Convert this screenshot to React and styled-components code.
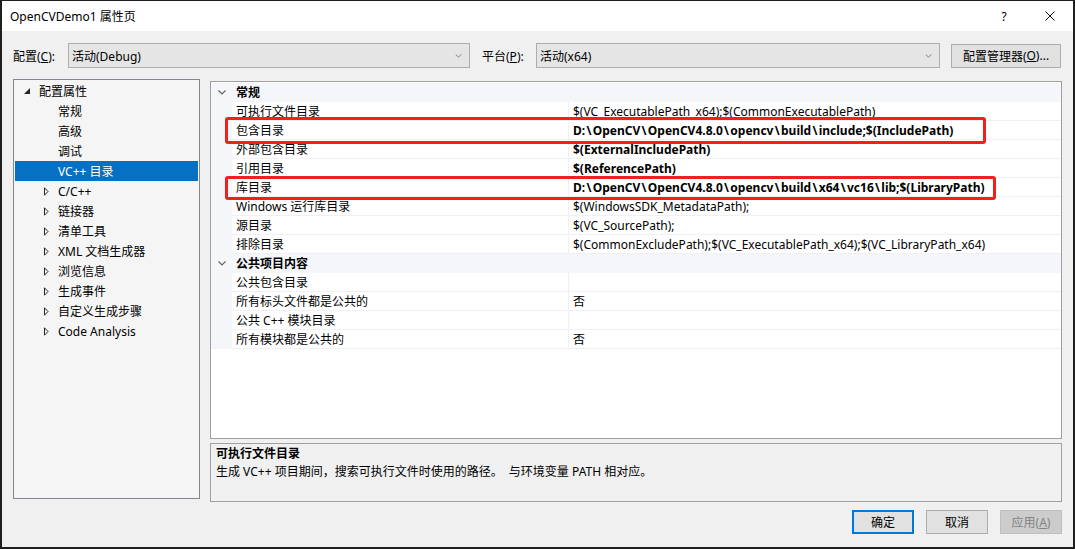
import React from 'react';
import styled, { createGlobalStyle } from 'styled-components';

const GlobalStyle = createGlobalStyle`
  html, body {
    margin: 0;
    padding: 0;
    background: #ffffff;
  }
  body {
    font-family: 'Noto Sans', 'Noto Sans CJK SC', sans-serif;
    font-size: 12px;
    color: #000;
  }
  * {
    box-sizing: border-box;
  }
`;

const treeItems = [
  { label: '常规' },
  { label: '高级' },
  { label: '调试' },
  { label: 'VC++ 目录', selected: true },
  { label: 'C/C++', collapsed: true },
  { label: '链接器', collapsed: true },
  { label: '清单工具', collapsed: true },
  { label: 'XML 文档生成器', collapsed: true },
  { label: '浏览信息', collapsed: true },
  { label: '生成事件', collapsed: true },
  { label: '自定义生成步骤', collapsed: true },
  { label: 'Code Analysis', collapsed: true },
];

const categories = [
  {
    title: '常规',
    rows: [
      { name: '可执行文件目录', value: '$(VC_ExecutablePath_x64);$(CommonExecutablePath)' },
      { name: '包含目录', value: 'D:\\OpenCV\\OpenCV4.8.0\\opencv\\build\\include;$(IncludePath)', bold: true },
      { name: '外部包含目录', value: '$(ExternalIncludePath)', bold: true },
      { name: '引用目录', value: '$(ReferencePath)', bold: true },
      { name: '库目录', value: 'D:\\OpenCV\\OpenCV4.8.0\\opencv\\build\\x64\\vc16\\lib;$(LibraryPath)', bold: true },
      { name: 'Windows 运行库目录', value: '$(WindowsSDK_MetadataPath);' },
      { name: '源目录', value: '$(VC_SourcePath);' },
      { name: '排除目录', value: '$(CommonExcludePath);$(VC_ExecutablePath_x64);$(VC_LibraryPath_x64)' },
    ],
  },
  {
    title: '公共项目内容',
    rows: [
      { name: '公共包含目录', value: '' },
      { name: '所有标头文件都是公共的', value: '否' },
      { name: '公共 C++ 模块目录', value: '' },
      { name: '所有模块都是公共的', value: '否' },
    ],
  },
];

// red annotation frames drawn over the grid
const highlights = [
  { left: 14, top: 35, width: 761, height: 27 },
  { left: 14, top: 94, width: 771, height: 24 },
];

// the dialog font draws backslashes wider than Noto Sans does
const renderPath = (value) =>
  value.split('\\').map((part, i) => (
    <React.Fragment key={i}>
      {i > 0 && <Backslash>\</Backslash>}
      {part}
    </React.Fragment>
  ));

const ChevronDown = ({ color = '#606060', w = 8, h = 5 }) => (
  <svg width={w} height={h} viewBox="0 0 8 5">
    <path d="M0.5 0.5 L4 4 L7.5 0.5" fill="none" stroke={color} strokeWidth="1.1" />
  </svg>
);

const ExpandedGlyph = () => (
  <svg width="6" height="6" viewBox="0 0 6 6">
    <polygon points="6,0 6,6 0,6" fill="#262626" />
  </svg>
);

const CollapsedGlyph = () => (
  <svg width="6" height="9" viewBox="0 0 6 9">
    <polygon points="1.5,0.8 5,4.5 1.5,8.2" fill="none" stroke="#262626" strokeWidth="1" />
  </svg>
);

const CloseGlyph = () => (
  <svg width="10" height="10" viewBox="0 0 10 10">
    <path d="M0.5 0.5 L9.5 9.5 M9.5 0.5 L0.5 9.5" stroke="#111" strokeWidth="1" />
  </svg>
);

export default function App() {
  return (
    <>
      <GlobalStyle />
      <Window>
        <TitleBar>
          <Title>OpenCVDemo1 属性页</Title>
          <CaptionButton>?</CaptionButton>
          <CaptionButton>
            <CloseGlyph />
          </CaptionButton>
        </TitleBar>

        <Body>
          <TopRow>
            <FieldLabel width={55}>
              配置(<u>C</u>):
            </FieldLabel>
            <Combo width={402}>
              <span>活动(Debug)</span>
              <ChevronDown color="#707070" w={7} h={4} />
            </Combo>
            <FieldLabel width={54} gap={12}>
              平台(<u>P</u>):
            </FieldLabel>
            <Combo width={404}>
              <span>活动(x64)</span>
              <ChevronDown color="#707070" w={7} h={4} />
            </Combo>
            <PushButton width={110} gap={11}>
              配置管理器(<u>O</u>)...
            </PushButton>
          </TopRow>

          <Main>
            <Tree>
              <TreeRow indent={9}>
                <GlyphSlot>
                  <ExpandedGlyph />
                </GlyphSlot>
                配置属性
              </TreeRow>
              {treeItems.map((item) => (
                <TreeRow key={item.label} indent={28} selected={item.selected}>
                  <GlyphSlot>{item.collapsed && <CollapsedGlyph />}</GlyphSlot>
                  {item.label}
                </TreeRow>
              ))}
            </Tree>

            <RightColumn>
              <Grid>
                {categories.map((cat) => (
                  <React.Fragment key={cat.title}>
                    <CategoryRow>
                      <Gutter>
                        <ChevronDown />
                      </Gutter>
                      <CategoryTitle>{cat.title}</CategoryTitle>
                    </CategoryRow>
                    {cat.rows.map((row) => (
                      <PropRow key={row.name}>
                        <Gutter />
                        <PropName>{row.name}</PropName>
                        <PropValue bold={row.bold}>{renderPath(row.value)}</PropValue>
                      </PropRow>
                    ))}
                  </React.Fragment>
                ))}
                {highlights.map((h, i) => (
                  <Highlight
                    key={i}
                    style={{ left: h.left, top: h.top, width: h.width, height: h.height }}
                  />
                ))}
              </Grid>

              <Description>
                <DescTitle>可执行文件目录</DescTitle>
                <DescText>生成 VC++ 项目期间，搜索可执行文件时使用的路径。&nbsp; 与环境变量 PATH 相对应。</DescText>
              </Description>
            </RightColumn>
          </Main>

          <Footer>
            <DialogButton primary>确定</DialogButton>
            <DialogButton>取消</DialogButton>
            <DialogButton disabled>
              应用(<u>A</u>)
            </DialogButton>
          </Footer>
        </Body>
      </Window>
    </>
  );
}

const Window = styled.div`
  width: 1075px;
  height: 549px;
  border: 2px solid #1f1f1f;
  border-top-width: 1px;
  display: flex;
  flex-direction: column;
  background: #f0f0f0;
  overflow: hidden;
`;

const TitleBar = styled.div`
  height: 30px;
  flex: none;
  background: #ffffff;
  display: flex;
  align-items: center;
  padding-left: 8px;
`;

const Title = styled.div`
  flex: 1;
  line-height: 30px;
  padding-top: 1px;
`;

const CaptionButton = styled.div`
  width: 46px;
  height: 30px;
  display: flex;
  align-items: center;
  justify-content: center;
  font-size: 12px;
`;

const Body = styled.div`
  flex: 1;
  display: flex;
  flex-direction: column;
  padding: 12px 11px 0 11px;
`;

const TopRow = styled.div`
  height: 25px;
  display: flex;
  align-items: center;
`;

const FieldLabel = styled.div`
  width: ${(p) => p.width}px;
  margin-left: ${(p) => p.gap || 0}px;
  flex: none;
  white-space: nowrap;
`;

const Combo = styled.div`
  width: ${(p) => p.width}px;
  height: 25px;
  flex: none;
  border: 1px solid #adadad;
  background: #e5e5e5;
  display: flex;
  align-items: center;
  justify-content: space-between;
  padding: 0 7px 0 3px;
`;

const PushButton = styled.div`
  width: ${(p) => p.width}px;
  margin-left: ${(p) => p.gap || 0}px;
  height: 24px;
  flex: none;
  border: 1px solid #adadad;
  background: #e1e1e1;
  display: flex;
  align-items: center;
  justify-content: center;
  white-space: nowrap;
`;

const Main = styled.div`
  height: 421px;
  margin-top: 11px;
  display: flex;
  gap: 10px;
  flex: none;
`;

const Tree = styled.div`
  width: 187px;
  height: 420px;
  flex: none;
  border: 1px solid #828790;
  background: #f5f5f5;
  padding: 1px;
`;

const TreeRow = styled.div`
  height: 20px;
  display: flex;
  align-items: center;
  padding-left: ${(p) => p.indent}px;
  white-space: nowrap;
  background: ${(p) => (p.selected ? '#0671c2' : 'transparent')};
  color: ${(p) => (p.selected ? '#ffffff' : '#000000')};
`;

const GlyphSlot = styled.span`
  width: 15px;
  flex: none;
  display: flex;
  align-items: center;
`;

const RightColumn = styled.div`
  flex: 1;
  display: flex;
  flex-direction: column;
  gap: 4px;
  margin-top: 2px;
`;

const Grid = styled.div`
  position: relative;
  height: 358px;
  flex: none;
  border: 1px solid #a0a0a0;
  background: #ffffff;
  padding-top: 1px;
`;

const CategoryRow = styled.div`
  height: 19px;
  display: flex;
  align-items: center;
  background: #f4f6fa;
`;

const Gutter = styled.div`
  width: 21px;
  height: 100%;
  flex: none;
  display: flex;
  align-items: center;
  justify-content: center;
  background: #f4f6fa;
`;

const CategoryTitle = styled.div`
  padding: 1px 0 0 4px;
  font-weight: 700;
  line-height: 18px;
`;

const PropRow = styled.div`
  height: 19px;
  display: flex;
`;

const PropName = styled.div`
  width: 337px;
  flex: none;
  padding: 1px 0 0 4px;
  line-height: 17px;
  border-bottom: 1px solid #efeff4;
  border-right: 1px solid #efeff4;
  white-space: nowrap;
`;

const PropValue = styled.div`
  flex: 1;
  padding: 1px 0 0 4px;
  line-height: 17px;
  font-weight: ${(p) => (p.bold ? 700 : 400)};
  border-bottom: 1px solid #efeff4;
  white-space: nowrap;
`;

const Backslash = styled.span`
  padding: 0 1.3px;
`;

const Highlight = styled.div`
  position: absolute;
  border: 3px solid #f0201c;
  border-radius: 3px;
  pointer-events: none;
`;

const Description = styled.div`
  height: 59px;
  flex: none;
  border: 1px solid #a0a0a0;
  background: #f0f0f0;
  padding: 1px 5px;
`;

const DescTitle = styled.div`
  font-weight: 700;
  line-height: 18px;
`;

const DescText = styled.div`
  line-height: 18px;
  white-space: nowrap;
`;

const Footer = styled.div`
  margin-top: 10px;
  display: flex;
  justify-content: flex-end;
  gap: 12px;
`;

const DialogButton = styled.div`
  width: 62px;
  height: 24px;
  display: flex;
  align-items: center;
  justify-content: center;
  background: ${(p) => (p.disabled ? '#cccccc' : '#e1e1e1')};
  color: ${(p) => (p.disabled ? '#838383' : '#000000')};
  border: ${(p) => (p.primary ? '2px solid #0078d7' : p.disabled ? '1px solid #bfbfbf' : '1px solid #adadad')};
`;
